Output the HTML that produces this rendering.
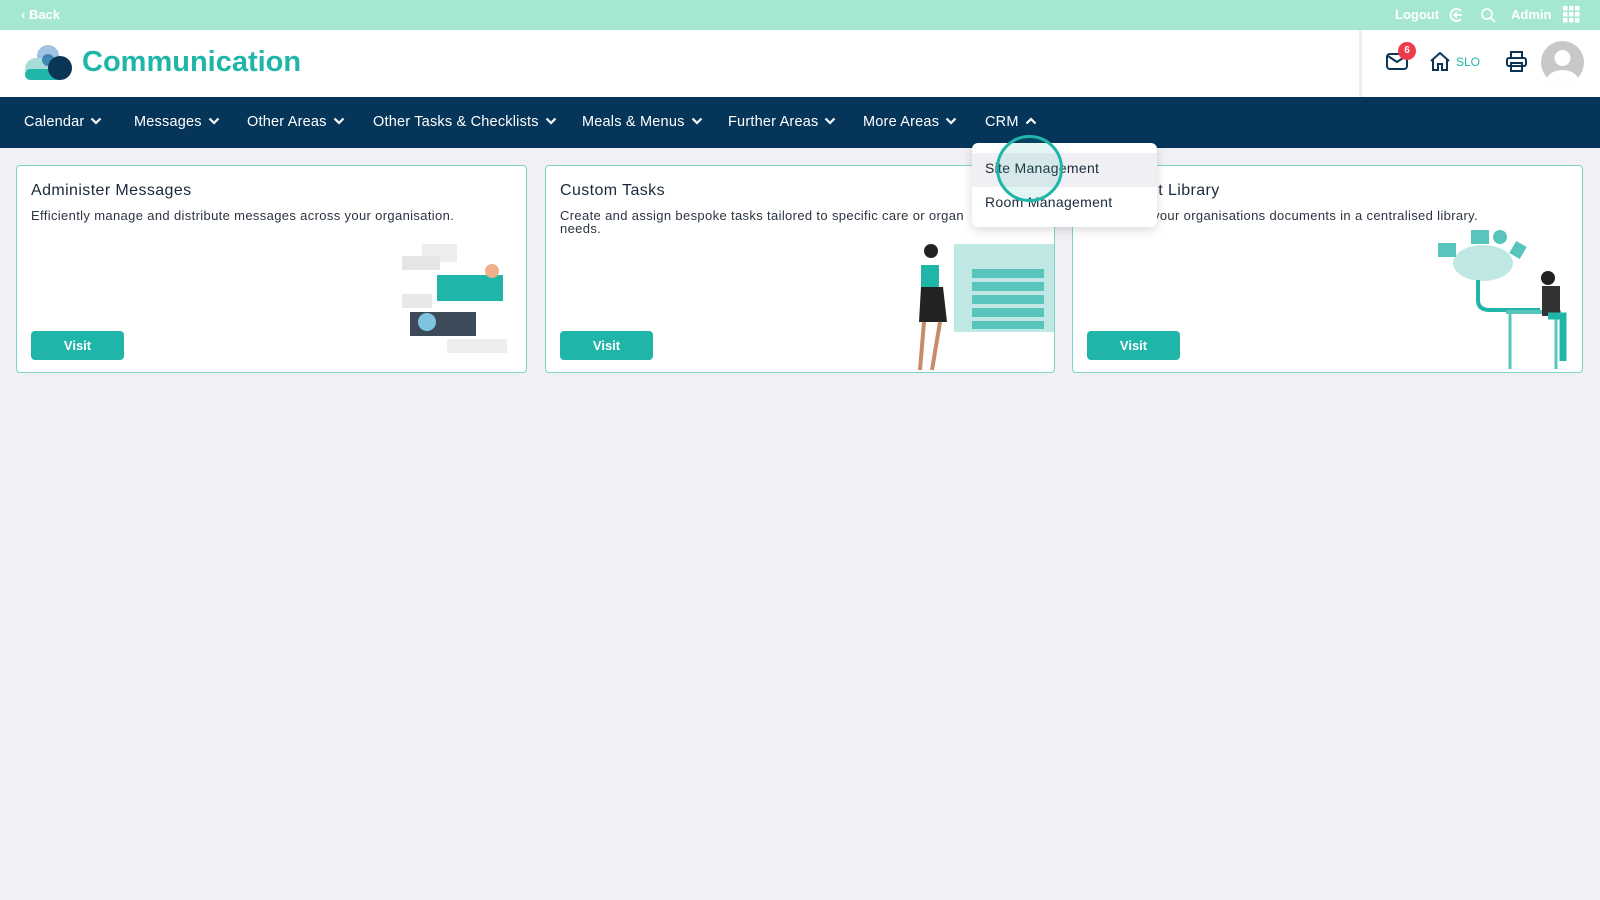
<!DOCTYPE html>
<html><head><meta charset="utf-8"><style>
*{box-sizing:border-box;margin:0;padding:0}
body{width:1600px;height:900px;background:#f0f0f5;font-family:"Liberation Sans",sans-serif;position:relative;overflow:hidden;color:#1f2d3d}
.top{position:absolute;left:0;top:0;width:1600px;height:30px;background:#a6e7cf;color:#fff;font-size:13px;font-weight:bold}
.hdr{position:absolute;left:0;top:30px;width:1600px;height:67px;background:#fff}
.nav{position:absolute;left:0;top:97px;width:1600px;height:51px;background:#05365a;color:#fff;font-size:14.5px;letter-spacing:.2px}
.nav span{position:absolute;top:17px;white-space:nowrap}
.nav svg{margin-left:6px;vertical-align:1px}
.card{position:absolute;top:165px;height:208px;background:#fff;border:1.5px solid #7fd3c6;border-radius:4px}
.card h3{position:absolute;left:14px;top:16px;font-size:16px;font-weight:normal;color:#1a2a3a;letter-spacing:.4px}
.card p{position:absolute;left:14px;top:43px;font-size:13px;color:#2a3440;line-height:13px;width:440px;letter-spacing:.35px}
.btn{position:absolute;left:14px;top:165px;width:93px;height:29px;background:#1fb5a8;border-radius:4px;color:#fff;font-weight:bold;font-size:13px;text-align:center;line-height:29px}
.dd{position:absolute;left:972px;top:143px;width:185px;height:84px;background:#fff;border-radius:6px;box-shadow:0 3px 10px rgba(0,0,0,.15);font-size:14px;color:#1a2a3a;letter-spacing:.3px}
</style></head><body>
<div class="top"><span style="position:absolute;left:21px;top:7px">‹ Back</span>
<span style="position:absolute;left:1395px;top:7px">Logout</span>
<svg style="position:absolute;left:1448px;top:7px" width="16" height="16" viewBox="0 0 16 16" fill="none" stroke="#fff" stroke-width="1.8"><path d="M13 4A6 6 0 1 0 13 12"/><path d="M14 8H6M9 5L6 8l3 3"/></svg>
<svg style="position:absolute;left:1480px;top:7px" width="16" height="16" viewBox="0 0 16 16" fill="none" stroke="#fff" stroke-width="1.6"><circle cx="7" cy="7" r="5"/><path d="M11 11l4 4"/></svg>
<span style="position:absolute;left:1511px;top:7px">Admin</span>
<svg style="position:absolute;left:1563px;top:6px" width="17" height="17" viewBox="0 0 17 17" fill="#fff"><rect x="0" y="0" width="4.5" height="4.5"/><rect x="6" y="0" width="4.5" height="4.5"/><rect x="12" y="0" width="4.5" height="4.5"/><rect x="0" y="6" width="4.5" height="4.5"/><rect x="6" y="6" width="4.5" height="4.5"/><rect x="12" y="6" width="4.5" height="4.5"/><rect x="0" y="12" width="4.5" height="4.5"/><rect x="6" y="12" width="4.5" height="4.5"/><rect x="12" y="12" width="4.5" height="4.5"/></svg>
</div>
<div class="hdr">
<svg style="position:absolute;left:24px;top:14px" width="50" height="38" viewBox="0 0 50 38"><circle cx="24" cy="12" r="11" fill="#9fc3e0"/><rect x="1" y="14" width="38" height="22" rx="11" fill="#a8dcd8"/><rect x="1" y="25" width="38" height="11" rx="5.5" fill="#1fb5a8"/><circle cx="24" cy="16" r="6" fill="#1565a8" opacity=".7"/><circle cx="36" cy="24" r="12" fill="#0b3556"/></svg>
<div style="position:absolute;left:82px;top:16px;font-size:29px;font-weight:bold;color:#1fb5a8">Communication</div>
<div style="position:absolute;left:1359px;top:0;width:3px;height:67px;background:#eceef2"></div>
<svg style="position:absolute;left:1386px;top:22px" width="22" height="18" viewBox="0 0 22 18" fill="none" stroke="#0b3556" stroke-width="2"><rect x="1" y="2" width="20" height="15" rx="3"/><path d="M2 4l9 6 9-6"/></svg>
<div style="position:absolute;left:1398px;top:12px;width:18px;height:18px;border-radius:50%;background:#ee3b4b;color:#fff;font-size:10px;font-weight:bold;text-align:center;line-height:18px">6</div>
<svg style="position:absolute;left:1430px;top:22px" width="20" height="19" viewBox="0 0 20 19" fill="none" stroke="#0b3556" stroke-width="2"><path d="M1 9L10 1l9 8M3 7v11h5v-6h4v6h5V7"/></svg>
<span style="position:absolute;left:1456px;top:25px;color:#1fb5a8;font-size:12px">SLO</span>
<svg style="position:absolute;left:1506px;top:21px" width="21" height="21" viewBox="0 0 21 21" fill="none" stroke="#0b3556" stroke-width="2"><rect x="5" y="1" width="11" height="6"/><rect x="1" y="7" width="19" height="8" rx="2"/><rect x="5" y="12" width="11" height="8"/></svg>
<svg style="position:absolute;left:1541px;top:11px" width="43" height="43" viewBox="0 0 43 43"><defs><clipPath id="c"><circle cx="21.5" cy="21.5" r="21.5"/></clipPath></defs><circle cx="21.5" cy="21.5" r="21.5" fill="#c8c8c8"/><g clip-path="url(#c)" fill="#fff"><circle cx="21.5" cy="17" r="8"/><ellipse cx="21.5" cy="40" rx="16" ry="11"/></g></svg>
</div>
<div class="nav">
<span style="left:24px">Calendar<svg width="12" height="8" viewBox="0 0 12 8"><path d="M1.5 1.5l4.5 4.5 4.5-4.5" stroke="#fff" stroke-width="2.2" fill="none"/></svg></span>
<span style="left:134px">Messages<svg width="12" height="8" viewBox="0 0 12 8"><path d="M1.5 1.5l4.5 4.5 4.5-4.5" stroke="#fff" stroke-width="2.2" fill="none"/></svg></span>
<span style="left:247px">Other Areas<svg width="12" height="8" viewBox="0 0 12 8"><path d="M1.5 1.5l4.5 4.5 4.5-4.5" stroke="#fff" stroke-width="2.2" fill="none"/></svg></span>
<span style="left:373px">Other Tasks &amp; Checklists<svg width="12" height="8" viewBox="0 0 12 8"><path d="M1.5 1.5l4.5 4.5 4.5-4.5" stroke="#fff" stroke-width="2.2" fill="none"/></svg></span>
<span style="left:582px">Meals &amp; Menus<svg width="12" height="8" viewBox="0 0 12 8"><path d="M1.5 1.5l4.5 4.5 4.5-4.5" stroke="#fff" stroke-width="2.2" fill="none"/></svg></span>
<span style="left:728px">Further Areas<svg width="12" height="8" viewBox="0 0 12 8"><path d="M1.5 1.5l4.5 4.5 4.5-4.5" stroke="#fff" stroke-width="2.2" fill="none"/></svg></span>
<span style="left:863px">More Areas<svg width="12" height="8" viewBox="0 0 12 8"><path d="M1.5 1.5l4.5 4.5 4.5-4.5" stroke="#fff" stroke-width="2.2" fill="none"/></svg></span>
<span style="left:985px">CRM<svg width="12" height="8" viewBox="0 0 12 8"><path d="M1.5 6.5l4.5-4.5 4.5 4.5" stroke="#fff" stroke-width="2.2" fill="none"/></svg></span>
</div>
<div class="card" style="left:16px;width:511px"><h3>Administer Messages</h3><p>Efficiently manage and distribute messages across your organisation.</p><div class="btn">Visit</div>
<svg style="position:absolute;left:385px;top:78px" width="110" height="115" viewBox="0 0 110 115"><rect x="20" y="0" width="35" height="18" fill="#eee"/><rect x="0" y="12" width="38" height="14" fill="#e5e5e5"/><rect x="35" y="31" width="66" height="26" fill="#1fb5a8"/><rect x="0" y="50" width="30" height="14" fill="#e8e8e8"/><rect x="8" y="68" width="66" height="24" fill="#3d4a5a"/><circle cx="25" cy="78" r="9" fill="#7fc4de"/><circle cx="90" cy="27" r="7" fill="#f0b08a"/><rect x="45" y="95" width="60" height="14" fill="#eee"/></svg></div>
<div class="card" style="left:545px;width:510px"><h3>Custom Tasks</h3><p style="width:420px">Create and assign bespoke tasks tailored to specific care or organ needs.</p><div class="btn">Visit</div>
<svg style="position:absolute;left:350px;top:75px" width="160" height="132" viewBox="0 0 160 132"><rect x="58" y="3" width="100" height="88" fill="#bfe8e4"/><rect x="76" y="28" width="72" height="9" fill="#57c5bb"/><rect x="76" y="41" width="72" height="9" fill="#57c5bb"/><rect x="76" y="54" width="72" height="9" fill="#57c5bb"/><rect x="76" y="67" width="72" height="9" fill="#57c5bb"/><rect x="76" y="80" width="72" height="8" fill="#57c5bb"/><circle cx="35" cy="10" r="7" fill="#222"/><rect x="25" y="24" width="18" height="22" fill="#1fb5a8"/><path d="M25 46h22l4 35H23z" fill="#222"/><path d="M28 81l-4 48M44 81l-8 48" stroke="#c98b67" stroke-width="4"/></svg></div>
<div class="card" style="left:1072px;width:511px"><h3>Document Library</h3><p>Access all your organisations documents in a centralised library.</p><div class="btn">Visit</div>
<svg style="position:absolute;left:365px;top:62px" width="146" height="145" viewBox="0 0 146 145"><ellipse cx="45" cy="35" rx="30" ry="18" fill="#bfe8e4"/><rect x="0" y="15" width="18" height="14" fill="#57c5bb"/><rect x="33" y="2" width="18" height="14" fill="#57c5bb"/><circle cx="62" cy="9" r="7" fill="#57c5bb"/><rect x="74" y="15" width="12" height="14" fill="#57c5bb" transform="rotate(30 80 22)"/><path d="M40 52v20q0 10 12 10h50" stroke="#1fb5a8" stroke-width="4" fill="none"/><rect x="68" y="82" width="55" height="4" fill="#57c5bb"/><path d="M72 86v55M118 86v55" stroke="#57c5bb" stroke-width="3"/><circle cx="110" cy="50" r="7" fill="#222"/><rect x="104" y="58" width="18" height="30" fill="#333"/><path d="M110 88h15v45" stroke="#1fb5a8" stroke-width="7" fill="none"/></svg></div>
<div class="dd"><div style="position:absolute;top:10px;left:0;width:185px;height:34px;background:#f0f0f4"></div><span style="position:absolute;left:13px;top:17px">Site Management</span><span style="position:absolute;left:13px;top:51px">Room Management</span></div>
<div style="position:absolute;left:996px;top:135px;width:67px;height:67px;border-radius:50%;border:3px solid #1fb5a8;background:rgba(31,181,168,.12)"></div>
</body></html>
